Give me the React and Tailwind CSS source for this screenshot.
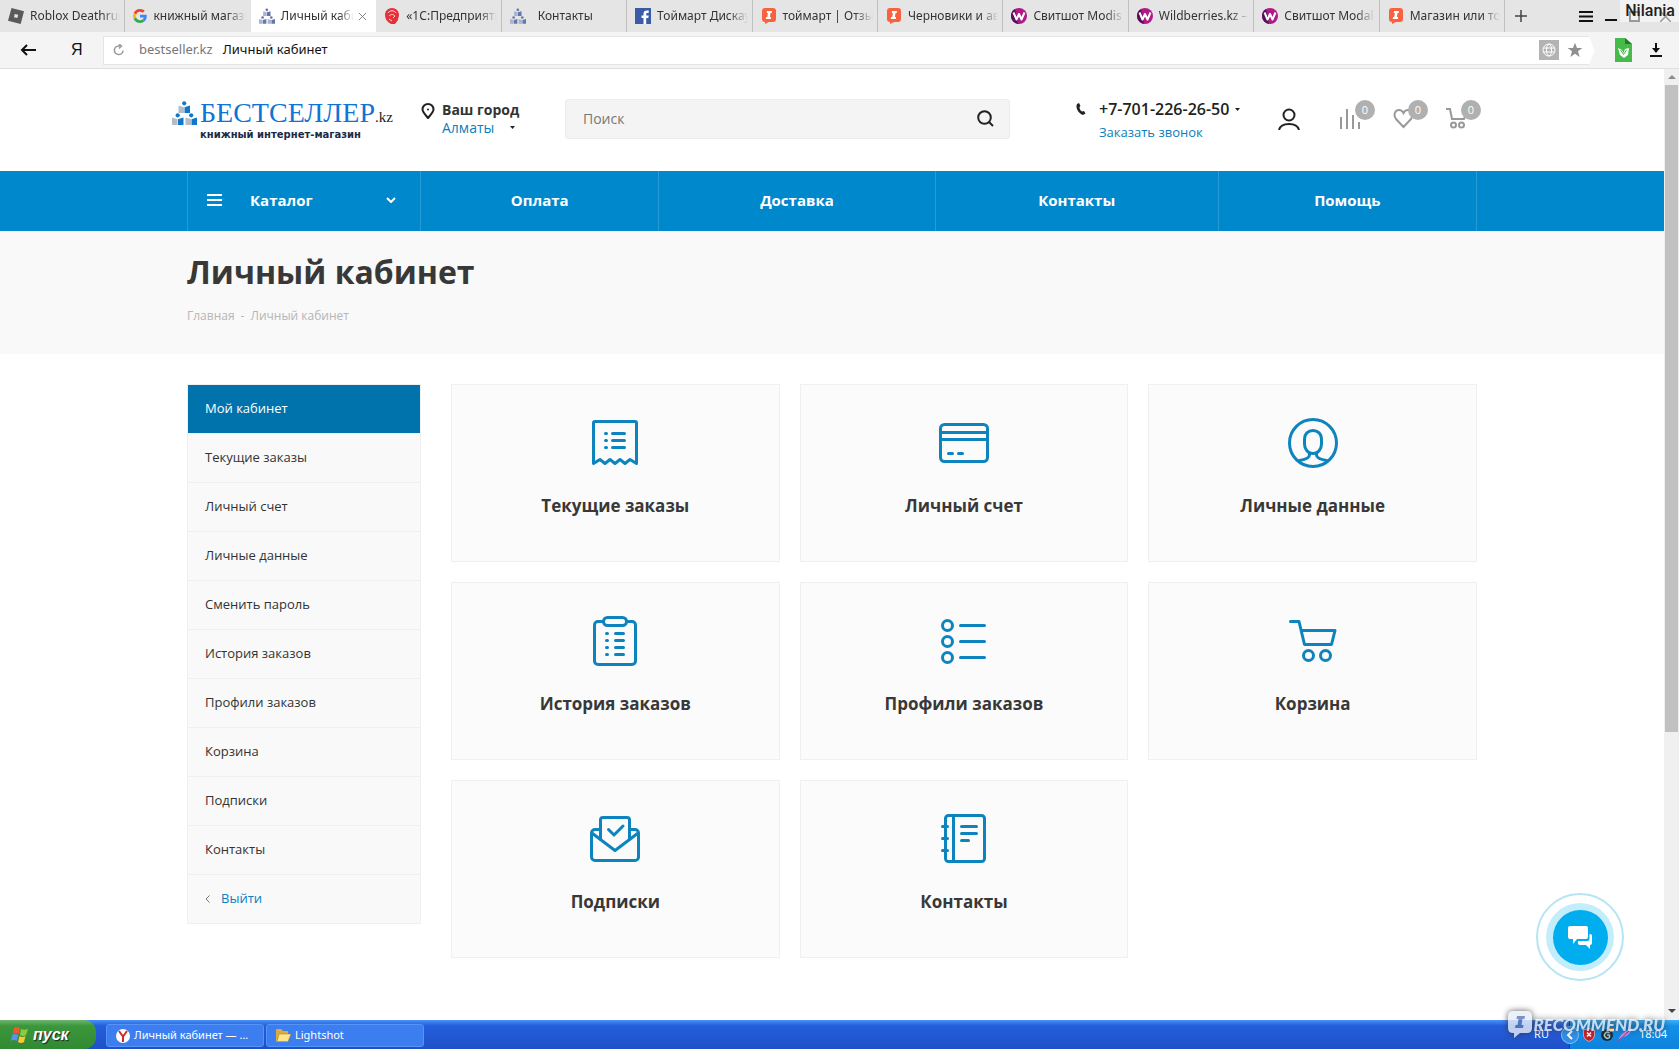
import React from "react";
import clsx from "clsx";

const tabs = [
    { title: "Roblox Deathrun", icon: "roblox" },
    { title: "книжный магазин", icon: "google" },
    { title: "Личный кабинет", icon: "books", active: true },
    { title: "«1С:Предприятие", icon: "onec" },
    { title: "Контакты", icon: "books" },
    { title: "Тоймарт Дискаунтер", icon: "facebook" },
    { title: "тоймарт | Отзывы", icon: "recommend" },
    { title: "Черновики и автор", icon: "recommend" },
    { title: "Свитшот Modis", icon: "wildberries" },
    { title: "Wildberries.kz –", icon: "wildberries" },
    { title: "Свитшот Modal", icon: "wildberries" },
    { title: "Магазин или торг", icon: "recommend" },
];

const sideLinks = [
    "Мой кабинет",
    "Текущие заказы",
    "Личный счет",
    "Личные данные",
    "Сменить пароль",
    "История заказов",
    "Профили заказов",
    "Корзина",
    "Подписки",
    "Контакты",
];

const cards = [
    { title: "Текущие заказы", icon: "receipt" },
    { title: "Личный счет", icon: "card" },
    { title: "Личные данные", icon: "person" },
    { title: "История заказов", icon: "clipboard" },
    { title: "Профили заказов", icon: "list" },
    { title: "Корзина", icon: "cart" },
    { title: "Подписки", icon: "mail" },
    { title: "Контакты", icon: "notebook" },
];

const cardIcons = {
    receipt: (
        <>
            <path d="M3.500 45.500V5a1.500 1.500 0 0 1 1.500-1.500h40a1.500 1.500 0 0 1 1.500 1.500v40.500L40 41.500l-5 4-5-4-5 4-5-4-5 4-5-4z" />
            <path d="M15.500 15.500h1M15.500 22.500h1M15.500 29.500h1M22.500 15.500h12M22.500 22.500h12M22.500 29.500h12" />
        </>
    ),
    card: (
        <>
            <rect x="1.500" y="6.500" width="47" height="37" rx="4" />
            <path d="M2 14.500h46M2 21.500h46M9.500 35.500h4M19.500 35.500h4" />
        </>
    ),
    person: (
        <>
            <circle cx="25" cy="25" r="23.500" />
            <path d="M25 12.500c-5 0-8.500 3.500-8.500 8.500v5c0 5.500 3.500 9.500 8.500 9.500s8.500-4 8.500-9.500v-5c0-5-3.500-8.500-8.500-8.500z" />
            <path d="M21.500 35v2c0 3-4 4.500-10 5.500M28.500 35v2c0 3 4 4.500 10 5.500" />
        </>
    ),
    clipboard: (
        <>
            <path d="M13 5.500H8A3.500 3.500 0 0 0 4.500 9v36A3.500 3.500 0 0 0 8 48.500h34a3.500 3.500 0 0 0 3.500-3.500V9A3.500 3.500 0 0 0 42 5.500h-5" />
            <rect x="13.500" y="1.500" width="23" height="8" rx="4" />
            <path d="M16.500 17.500h1M16.500 24.500h1M16.500 31.500h1M16.500 38.500h1M25.500 17.500h8M25.500 24.500h8M25.500 31.500h8M25.500 38.500h8" />
        </>
    ),
    list: (
        <>
            <circle cx="8.500" cy="9.500" r="5" />
            <circle cx="8.500" cy="25.500" r="5" />
            <circle cx="8.500" cy="41.500" r="5" />
            <path d="M21.500 9.500h24M21.500 25.500h24M21.500 41.500h24" />
        </>
    ),
    cart: (
        <>
            <path d="M2.500 5.500h8.500l5.500 23h27l3.500-14H13.500" />
            <circle cx="20.500" cy="39.500" r="5" />
            <circle cx="37.500" cy="39.500" r="5" />
        </>
    ),
    mail: (
        <>
            <path d="M9 15.500H5A3.500 3.500 0 0 0 1.500 19v24A3.500 3.500 0 0 0 5 46.500h40a3.500 3.500 0 0 0 3.500-3.500V19a3.500 3.500 0 0 0-3.500-3.500h-4" />
            <path d="M2.500 19.500L25 36.500l22.500-17" />
            <path d="M10.500 25V6a2.500 2.500 0 0 1 2.500-2.500h24A2.500 2.500 0 0 1 39.500 6v19" />
            <path d="M18.500 15.500l5.500 5.500 9-9" />
        </>
    ),
    notebook: (
        <>
            <rect x="6.500" y="1.500" width="39" height="46" rx="3" />
            <path d="M14.500 2v45M3.500 12.500h5M3.500 24.500h5M3.500 36.500h5M22.500 12.500h15M22.500 19.500h15M22.500 26.500h7" />
        </>
    ),
};

// Three little readers, each behind an open book
const BooksIcon = ({ className, light = "#b4bcc6", dark = "#0f78cc" }) => (
    <svg viewBox="0 0 25 24" className={className}>
        <path fill={light} d="M6.500 4.500l5.500 1.800V12H6.500zM0 16.500l5.500 1.800V24H0zM13.500 16.500l5.500 1.800V24h-5.500z" />
        <path fill={dark} d="M18 4.500l-5.500 1.800V12H18zM11.500 16.500L6 18.300V24h5.500zM25 16.500l-5.500 1.800V24H25z" />
        <circle cx="12.200" cy="2.300" r="2.100" fill={dark} />
        <circle cx="5.700" cy="14.300" r="2.100" fill={dark} />
        <circle cx="19.200" cy="14.300" r="2.100" fill={dark} />
    </svg>
);

const TabIcon = ({ name }) => {
    switch (name) {
        case "roblox":
            return (
                <svg viewBox="0 0 16 16" className="size-4 shrink-0">
                    <path
                        fill="#5a5a5a"
                        fillRule="evenodd"
                        d="M3.500 0L16 3.300 12.700 16 0 12.700zM6.700 5.900L6 9.200l3.400.8.800-3.300z"
                    />
                </svg>
            );
        case "google":
            return (
                <svg viewBox="0 0 48 48" className="size-[14px] shrink-0">
                    <path fill="#ea4335" d="M24 9.500c3.500 0 6.700 1.200 9.200 3.600l6.900-6.900C35.900 2.400 30.500 0 24 0 14.600 0 6.500 5.400 2.600 13.200l8 6.200C12.400 13.700 17.700 9.500 24 9.500z" />
                    <path fill="#4285f4" d="M47 24.600c0-1.600-.2-3.100-.4-4.600H24v9h12.900c-.6 3-2.200 5.500-4.700 7.200l7.700 6C44.400 38 47 31.800 47 24.600z" />
                    <path fill="#fbbc05" d="M10.500 28.600a14.500 14.500 0 0 1 0-9.200l-8-6.200a24 24 0 0 0 0 21.600z" />
                    <path fill="#34a853" d="M24 48c6.500 0 11.900-2.100 15.900-5.800l-7.700-6c-2.200 1.500-4.900 2.300-8.200 2.300-6.300 0-11.600-4.200-13.500-9.900l-8 6.200C6.500 42.600 14.600 48 24 48z" />
                </svg>
            );
        case "books":
            return (
                <BooksIcon className="size-4 shrink-0" light="#a9b3d0" dark="#6477a8" />
            );
        case "onec":
            return (
                <svg viewBox="0 0 16 16" className="size-4 shrink-0">
                    <path fill="#e8303a" d="M8 0c4 0 7 3 7 7 0 2-1 3-1 5l-3 4H7C3 14 1 11 1 7s3-7 7-7z" />
                    <path fill="none" stroke="#fbd5d5" d="M4 5c2-3 6-3 8 0M5 8c2-2 4-2 6 0l-2 2M5 11l3 2" />
                </svg>
            );
        case "facebook":
            return (
                <svg viewBox="0 0 16 16" className="size-4 shrink-0">
                    <path fill="#3b5ba9" d="M0 0h16v16H0z" />
                    <path fill="#fff" d="M8.500 16v-6H6.500V7.500h2V5.800C8.500 3.500 9.800 2.500 12 2.500h1.700v2.400h-1.200c-1 0-1.300.4-1.300 1.200v1.400h2.500l-.4 2.500h-2.100v6z" />
                </svg>
            );
        case "recommend":
            return (
                <svg viewBox="0 0 16 16" className="size-4 shrink-0">
                    <path fill="#f9613f" d="M4 0h8q3 0 3 3v8q0 3-3 3H8l-4 2v-2q-3 0-3-3V3q0-3 3-3z" />
                    <path fill="#fff" d="M6 3h5l-.3 2H9.500l-.6 4h1.200l-.3 2h-5l.3-2h1.200l.6-4H5.700z" />
                </svg>
            );
        default:
            return (
                <svg viewBox="0 0 16 16" className="size-4 shrink-0">
                    <circle cx="8" cy="8" r="8" fill="#b01a86" />
                    <path fill="#55125c" d="M0 8a8 8 0 0 1 4-7l3 14.900A8 8 0 0 1 0 8z" />
                    <path fill="none" stroke="#fff" strokeWidth="2" strokeLinejoin="round" d="M2.500 4.500l3 7L8 6l2.500 5.500 3-7" />
                </svg>
            );
    }
};

const TabBar = () => (
    <div className="flex h-8 bg-[#e5e5e5] pr-2 font-['Noto_Sans','Open_Sans',sans-serif] text-[12px] text-[#333]">
        <div className="flex min-w-0 max-w-[1505px] flex-1">
            {tabs.map((tab, i) => (
                <button
                    key={i}
                    className={clsx(
                        "flex min-w-0 flex-1 basis-0 items-center gap-1 border-r pl-2 pr-1 text-left",
                        tab.active && "border-white bg-white",
                        i === 1 && "border-transparent",
                        i === 3 && "border-[#c0c0c0]",
                        i !== 1 && !tab.active && "border-[#c0c0c0]"
                    )}
                >
                    <TabIcon name={tab.icon} />
                    <span
                        className={clsx(
                            "min-w-0 flex-1 overflow-hidden whitespace-nowrap mask-r-from-80%",
                            tab.title === "Контакты" ? "pl-2" : "pl-[2px]"
                        )}
                    >
                        {tab.title}
                    </span>
                    {tab.active && (
                        <svg viewBox="0 0 10 10" className="mr-1 size-[9px] shrink-0 stroke-[#777]" fill="none">
                            <path d="M1 1l8 8M9 1L1 9" />
                        </svg>
                    )}
                </button>
            ))}
        </div>
        <div className="ml-auto flex w-[166px] shrink-0 items-center">
            <button aria-label="Новая вкладка" className="ml-[10px]">
                <svg viewBox="0 0 12 12" className="size-3 stroke-[#444]" strokeWidth="1.500">
                    <path d="M6 0v12M0 6h12" />
                </svg>
            </button>
            <button aria-label="Меню" className="ml-auto mr-3">
                <svg viewBox="0 0 14 11" className="h-[11px] w-[14px] stroke-[#111]" strokeWidth="2">
                    <path d="M0 1h14M0 5.500h14M0 10h14" />
                </svg>
            </button>
            <button aria-label="Свернуть" className="mr-3 pt-2">
                <svg viewBox="0 0 12 2" className="h-[2px] w-3 fill-[#111]">
                    <path d="M0 0h12v2H0z" />
                </svg>
            </button>
            <button aria-label="Развернуть" className="mr-5">
                <svg viewBox="0 0 11 11" className="size-[11px] fill-none stroke-[#333]" strokeWidth="2">
                    <path d="M1 1h9v9H1z" />
                </svg>
            </button>
            <button aria-label="Закрыть">
                <svg viewBox="0 0 11 11" className="size-[11px] stroke-[#333]" strokeWidth="1.500">
                    <path d="M0 0l11 11M11 0L0 11" />
                </svg>
            </button>
        </div>
    </div>
);

const AddressBar = () => (
    <div className="flex h-[37px] items-center border-b border-[#dedede] bg-[#f4f4f4] font-['Noto_Sans','Open_Sans',sans-serif] text-[13px]">
        <div className="flex w-[103px] items-center gap-[35px] pl-5">
            <button aria-label="Назад">
                <svg viewBox="0 0 16 12" className="h-3 w-4 fill-none stroke-[#111]" strokeWidth="2">
                    <path d="M16 6H2M7 1L2 6l5 5" />
                </svg>
            </button>
            <button className="font-['Liberation_Sans',sans-serif] text-[16px] leading-5 text-[#111]">Я</button>
        </div>
        <div className="flex h-[29px] min-w-0 flex-1 items-center border border-r-0 border-[#e4e4e4] bg-white pl-[9px]">
            <svg viewBox="0 0 12 12" className="size-3 fill-none stroke-[#999]" strokeWidth="1.500">
                <path d="M7 2H5.500a4.300 4.300 0 1 0 4.500 4.500M6 0l2.500 2L6 4.500" />
            </svg>
            <span className="ml-[14px] text-[#777]">bestseller.kz</span>
            <span className="ml-[10px] text-[#111]">Личный кабинет</span>
            <div className="ml-auto flex items-center gap-2 pr-[6px]">
                <svg viewBox="0 0 20 20" className="size-5">
                    <path fill="#b3b3b3" d="M0 0h20v20H0z" />
                    <g fill="none" stroke="#fff">
                        <circle cx="10" cy="10" r="6" />
                        <ellipse cx="10" cy="10" rx="2.500" ry="6" />
                        <path d="M4.500 8h11M4.500 12h11" />
                    </g>
                </svg>
                <svg viewBox="0 0 24 24" className="size-4 fill-[#8f8f8f]">
                    <path d="M12 1l3 8h8l-6.500 5 2.500 8.500-7-5-7 5L7.500 14 1 9h8z" />
                </svg>
            </div>
        </div>
        <svg viewBox="0 0 6 29" className="h-[29px] w-[6px] shrink-0 fill-white">
            <path d="M0 0l5.500 14.500L0 29z" />
        </svg>
        <svg viewBox="0 0 17 24" className="ml-5 h-6 w-[17px]">
            <path fill="#46bb49" d="M0 0h10l7 6v18H0z" />
            <path fill="#27792c" d="M10 0v6h7z" />
            <path fill="#fff" d="M3 10l4 2 1.500 3L10 11l4-1-1 7-4 3-4-3z" />
            <path fill="none" stroke="#46bb49" d="M5.500 12l3 4.500 3-4.500" />
        </svg>
        <button aria-label="Загрузки" className="ml-[18px] mr-[17px]">
            <svg viewBox="0 0 12 14" className="h-[14px] w-3 fill-[#111]">
                <path d="M5 0h2v5h3L6 10 2 5h3zM0 12h12v2H0z" />
            </svg>
        </button>
    </div>
);

const CounterLink = ({ label, children }) => (
    <a href="#" aria-label={label} className="relative block">
        {children}
        <span className="absolute -top-2 left-[15px] flex size-5 items-center justify-center rounded-full bg-[#b0b0b0] text-[11px] text-white">
            0
        </span>
    </a>
);

const Caret = () => (
    <svg viewBox="0 0 5 3" className="h-[3px] w-[5px] fill-[#222]">
        <path d="M0 0h5L2.500 3z" />
    </svg>
);

const Header = () => (
    <header className="mx-auto flex h-[102px] w-full max-w-[1320px] items-center pb-[3px]">
        <a href="#" className="flex w-[221px] shrink-0 items-start">
            <BooksIcon className="mt-[2px] h-6 w-[25px] shrink-0" />
            <span className="ml-[3px] flex flex-col">
                <span className="flex items-baseline whitespace-nowrap font-['Liberation_Serif',serif] text-[28px] leading-7 text-[#0f74d4]">
                    БЕСТСЕЛЛЕР
                    <span className="text-[15px] text-[#222]">.kz</span>
                </span>
                <span className="whitespace-nowrap font-['DejaVu_Sans',sans-serif] text-[10px] font-bold leading-[8px] text-[#1c2b45]">
                    книжный интернет-магазин
                </span>
            </span>
        </a>
        <div className="flex w-[172px] shrink-0 items-start pl-7">
            <svg viewBox="0 0 14 16" className="mt-[2px] h-4 w-[14px] fill-none stroke-[#222]" strokeWidth="2">
                <path d="M7 15C4 11.500 1.500 9 1.500 6.300a5.500 5.300 0 0 1 11 0C12.500 9 10 11.500 7 15z" />
                <circle cx="7" cy="6.500" r="1" fill="#222" stroke="none" />
            </svg>
            <div className="ml-[7px] text-[14px] leading-[18px]">
                <div className="font-bold text-[#333]">Ваш город</div>
                <a href="#" className="flex items-center justify-between pr-1 text-[#0a80bd]">
                    Алматы
                    <Caret />
                </a>
            </div>
        </div>
        <form className="flex h-10 min-w-0 flex-1 items-center rounded-[3px] border border-[#ececec] bg-[#f4f4f4] pl-[17px] pr-[15px]">
            <input
                type="text"
                aria-label="Поиск"
                placeholder="Поиск"
                className="min-w-0 flex-1 bg-transparent text-[14px] outline-none placeholder:text-[#777]"
            />
            <button type="button" aria-label="Найти">
                <svg viewBox="0 0 17 17" className="size-[17px] fill-none stroke-[#222]" strokeWidth="2">
                    <circle cx="7.500" cy="7.500" r="6.300" />
                    <path d="M12 12l4 4" />
                </svg>
            </button>
        </form>
        <div className="flex w-[482px] shrink-0 items-center pl-[66px]">
            <div className="flex w-[202px] items-start pt-[5px]">
                <svg viewBox="0 0 10 12" className="mt-1 h-3 w-[10px] shrink-0 fill-[#222]">
                    <path d="M3 0L1 1C-1 5 3 11 7 12l2.500-1.500L8 8l-2 .5C4.500 7.500 3.500 6 3.500 4L4.500 3z" />
                </svg>
                <div className="ml-[13px]">
                    <div className="flex items-center gap-[6px] whitespace-nowrap text-[16px] font-semibold leading-5 text-[#222]">
                        +7-701-226-26-50 <Caret />
                    </div>
                    <a href="#" className="text-[13px] leading-[22px] text-[#0a80bd]">
                        Заказать звонок
                    </a>
                </div>
            </div>
            <a href="#" aria-label="Войти">
                <svg viewBox="0 0 22 22" className="size-[22px] fill-none stroke-[#222]" strokeWidth="2">
                    <circle cx="11" cy="7" r="5.500" />
                    <path d="M1 22c1-4 5-6 10-6s9 2 10 6" />
                </svg>
            </a>
            <div className="ml-10 flex gap-8">
                <CounterLink label="Сравнение">
                    <svg viewBox="0 0 21 21" className="size-[21px] stroke-[#999]" strokeWidth="2">
                        <path d="M1 9v12M7 1v20M13 7v14M19 14v7" />
                    </svg>
                </CounterLink>
                <CounterLink label="Избранное">
                    <svg viewBox="0 0 21 21" className="size-[21px] fill-none stroke-[#999]" strokeWidth="2">
                        <path d="M10.500 19L3 11C0 7 2 2 6 2c2 0 3.500 1 4.500 3 1-2 2.500-3 4.500-3 4 0 6 5 3 9z" />
                    </svg>
                </CounterLink>
                <CounterLink label="Корзина">
                    <svg viewBox="0 0 21 21" className="size-[21px] fill-none stroke-[#999]" strokeWidth="2">
                        <path d="M0 1h4l2 10h12l2-6" />
                        <circle cx="7.500" cy="17" r="2.500" />
                        <circle cx="15.500" cy="17" r="2.500" />
                    </svg>
                </CounterLink>
            </div>
        </div>
    </header>
);

const Nav = () => (
    <nav className="bg-[#0088cc] text-[15px] font-bold text-white">
        <div className="mx-auto flex h-[60px] max-w-[1290px] border-x border-[#2a9ad5] pb-[2px]">
            <a href="#" className="-mb-[2px] flex w-[233px] shrink-0 items-center border-r border-[#2a9ad5] pb-[2px] pl-[19px] pr-6">
                <svg viewBox="0 0 15 12" className="h-3 w-[15px] stroke-white" strokeWidth="2">
                    <path d="M0 1h15M0 6h15M0 11h15" />
                </svg>
                <span className="ml-7">Каталог</span>
                <svg viewBox="0 0 10 6" className="ml-auto h-[6px] w-[10px] fill-none stroke-white" strokeWidth="2">
                    <path d="M1 1l4 4 4-4" />
                </svg>
            </a>
            <a href="#" className="-mb-[2px] flex grow-[238] basis-0 items-center justify-center border-r border-[#2a9ad5] pb-[2px]">
                Оплата
            </a>
            <a href="#" className="-mb-[2px] flex grow-[276] basis-0 items-center justify-center border-r border-[#2a9ad5] pb-[2px]">
                Доставка
            </a>
            <a href="#" className="-mb-[2px] flex grow-[283] basis-0 items-center justify-center border-r border-[#2a9ad5] pb-[2px]">
                Контакты
            </a>
            <a href="#" className="-mb-[2px] flex grow-[258] basis-0 items-center justify-center pb-[2px]">
                Помощь
            </a>
        </div>
    </nav>
);

const Sidebar = () => (
    <aside className="w-[234px] shrink-0 self-start border border-[#f0f0f0] bg-[#f9f9f9] text-[13px] text-[#333]">
        {sideLinks.map((link, i) => (
            <a
                key={link}
                href="#"
                className={clsx(
                    "flex h-[49px] items-center border-b border-[#efefef] pl-[17px]",
                    i === 0 && "bg-[#0072ac] font-medium text-white"
                )}
            >
                {link}
            </a>
        ))}
        <a href="#" className="flex h-12 items-center gap-[11px] pl-[17px] text-[#0a80bd]">
            <svg viewBox="0 0 5 8" className="h-2 w-[5px] fill-none stroke-[#777]">
                <path d="M4.500.5L1 4l3.500 3.500" />
            </svg>
            Выйти
        </a>
    </aside>
);

const Scrollbar = () => (
    <div className="flex w-[15px] shrink-0 flex-col items-center bg-[#f0f0f0]">
        <svg viewBox="0 0 8 4" className="my-[6px] h-1 w-2 fill-[#8a8a8a]">
            <path d="M4 0l4 4H0z" />
        </svg>
        <div className="h-[68%] w-[13px] bg-[#c1c1c1]" />
        <svg viewBox="0 0 8 4" className="mb-[7px] mt-auto h-1 w-2 fill-[#444]">
            <path d="M0 0h8L4 4z" />
        </svg>
    </div>
);

const ChatButton = () => (
    <button
        aria-label="Чат"
        className="absolute bottom-[39px] right-[55px] flex size-[88px] items-center justify-center rounded-full border-2 border-[#b5e4f4] bg-white"
    >
        <span className="flex size-[68px] items-center justify-center rounded-full bg-[#c3edfb]">
            <span className="flex size-[55px] items-center justify-center rounded-full bg-[#00aeef]">
                <svg viewBox="0 0 24 23" className="h-[23px] w-6 fill-white">
                    <path d="M2 0h16q2 0 2 2v9q0 2-2 2H9l-4 5v-5H2q-2 0-2-2V2q0-2 2-2z" />
                    <path d="M21.500 8H22q2 0 2 2v7q0 2-2 2v4l-4-4h-6q-2 0-2-2v-2h9.500q2 0 2-2z" />
                </svg>
            </span>
        </span>
    </button>
);

const Taskbar = () => (
    <footer className="flex h-[29px] shrink-0 bg-linear-to-b from-[#4a91f5] via-[#245edb] via-20% to-[#1f50c8] font-['Noto_Sans','Open_Sans',sans-serif] text-[11px] text-white">
        <button className="flex w-24 items-center gap-1 rounded-r-xl bg-linear-to-b from-[#6fb56f] via-[#3c973c] via-20% to-[#2f8a31] pl-[10px] font-['Liberation_Sans',sans-serif] text-[16px] font-bold italic [text-shadow:1px_1px_1px_#222]">
            <svg viewBox="0 0 19 18" className="h-[18px] w-[19px]">
                <path fill="#f2582c" d="M4 2q3-2 6 0L8.500 8q-3-2-6 0z" />
                <path fill="#8ccb3f" d="M11 3q3 1.500 7 0l-2 6q-3 2-6 0z" />
                <path fill="#5a92ee" d="M2.200 9q3-2 6 0l-1.500 6q-3-2-6 0z" />
                <path fill="#fbc82f" d="M9.500 10q3 2 6 0L14 16q-3 2-6 0z" />
            </svg>
            пуск
        </button>
        <div className="ml-[10px] flex items-stretch gap-[2px] pb-[2px] pt-1">
            <button className="flex w-[158px] items-center gap-1 rounded-[3px] border border-[#5593f7] bg-[#3c7df0] pl-[9px]">
                <svg viewBox="0 0 14 14" className="size-[14px]">
                    <circle cx="7" cy="7" r="7" fill="#fff" />
                    <path fill="none" stroke="#d8262f" strokeWidth="2" d="M3 2l4 5.500L11 2M7 7v6" />
                </svg>
                Личный кабинет — ...
            </button>
            <button className="flex w-[158px] items-center gap-1 rounded-[3px] border border-[#5593f7] bg-[#3c7df0] pl-[9px]">
                <svg viewBox="0 0 15 13" className="h-[13px] w-[15px]">
                    <path fill="#d9ac3b" d="M0 1q0-1 1-1h4l2 2h5v11H1q-1 0-1-1z" />
                    <path fill="#fbe48c" stroke="#a57a1c" strokeWidth=".5" d="M3 5h12l-3 7.500H1z" />
                </svg>
                Lightshot
            </button>
        </div>
        <span className="ml-auto self-center pr-5">RU</span>
        <div className="relative flex w-[110px] items-center border-l border-[#123f9e] bg-linear-to-b from-[#3fb0f6] via-[#1290e9] via-20% to-[#0f82dc] pr-3">
            <svg viewBox="0 0 18 18" className="-ml-[9px] size-[18px] shrink-0">
                <circle cx="9" cy="9" r="8.500" fill="#2f8fe8" stroke="#7cc4fa" />
                <path d="M11 5L7 9l4 4" fill="none" stroke="#fff" strokeWidth="2" />
            </svg>
            <svg viewBox="0 0 12 14" className="ml-1 h-[14px] w-3">
                <path d="M6 .5L11.500 2v6q-1 4-5.500 5.500Q1.500 12 .5 8V2z" fill="#c5202a" stroke="#f0c8c8" strokeWidth=".7" />
                <path d="M4 4.500l4 4M8 4.500l-4 4" stroke="#fff" strokeWidth="1.500" />
            </svg>
            <svg viewBox="0 0 13 13" className="ml-[6px] size-[13px]">
                <circle cx="6" cy="7" r="6" fill="#1c2b36" />
                <path d="M8.500 5a3 3 0 1 0 0 4.500V7H6" fill="none" stroke="#9cc" strokeWidth="1.500" />
                <path d="M9 0h4v4H9z" fill="#f08a28" />
            </svg>
            <svg viewBox="0 0 14 13" className="ml-1 h-[13px] w-[14px]">
                <path d="M0 13Q2 5 14 0q-1 7-9 9z" fill="#d58be0" />
                <path d="M0 13L11 3" stroke="#7b3f94" />
            </svg>
            <span className="ml-auto">18:04</span>
        </div>
    </footer>
);

const App = () => {
    return (
        <div className="relative flex h-screen flex-col overflow-hidden bg-white font-['Open_Sans',sans-serif]">
            <TabBar />
            <AddressBar />
            <div className="relative flex min-h-0 flex-1">
                <div className="min-w-0 flex-1 overflow-hidden">
                    <Header />
                    <Nav />

                    {/* Page title */}
                    <div className="h-[123px] bg-[#f9f9f9]">
                        <div className="mx-auto max-w-[1290px] pt-5">
                            <h1 className="text-[32px] font-bold leading-[42px] text-[#383838]">Личный кабинет</h1>
                            <div className="mt-[14px] flex gap-[6px] text-[12px] leading-[18px] text-[#b6b5b5]">
                                <a href="#">Главная</a>
                                <span>-</span>
                                <span>Личный кабинет</span>
                            </div>
                        </div>
                    </div>

                    <main className="mx-auto flex max-w-[1290px] gap-[30px] pt-[30px]">
                        <Sidebar />
                        <div className="grid flex-1 grid-cols-3 gap-5 self-start">
                            {cards.map((card) => (
                                <a
                                    key={card.title}
                                    href="#"
                                    className="flex h-[178px] flex-col items-center border border-[#f0f0f0] bg-[#fbfbfb] pt-[33px]"
                                >
                                    <svg
                                        viewBox="0 0 50 50"
                                        className="size-[50px] fill-none stroke-[#0e84bf]"
                                        strokeWidth="3"
                                        strokeLinecap="round"
                                        strokeLinejoin="round"
                                    >
                                        {cardIcons[card.icon]}
                                    </svg>
                                    <span className="mt-[26px] text-[17px] font-bold leading-6 text-[#383838]">
                                        {card.title}
                                    </span>
                                </a>
                            ))}
                        </div>
                    </main>
                </div>
                <Scrollbar />
                <ChatButton />
            </div>
            <Taskbar />

            {/* Overlaid marks */}
            <div className="absolute right-0 top-0 bg-white/50 pl-[5px] pr-1 font-['Roboto',sans-serif] text-[16px] font-medium leading-[22px] text-[#222]">
                Nilania
            </div>
            <div className="absolute bottom-[11px] right-[14px] flex items-center gap-[2px] opacity-80 drop-shadow-[0_0_3px_#333]">
                <svg viewBox="0 0 24 27" className="h-[27px] w-6">
                    <path fill="#e8edf8" d="M5 0h14q5 0 5 5v12q0 5-5 5h-7l-6 5v-5H5q-5 0-5-5V5q0-5 5-5z" />
                    <path fill="#5b78b5" d="M9 5h8l-.5 3h-2l-1 6h2l-.5 3H7l.5-3h2l1-6h-2z" />
                </svg>
                <span className="font-['Lato',sans-serif] text-[17px] font-black italic leading-5 text-[#e8edf8]">
                    RECOMMEND.RU
                </span>
            </div>
        </div>
    );
};

export default App;
